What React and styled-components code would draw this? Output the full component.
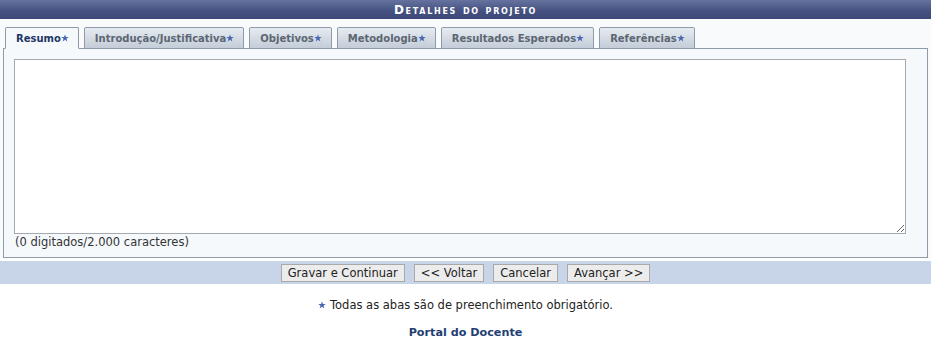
import React, { useState } from "react";
import styled, { createGlobalStyle } from "styled-components";

const GlobalStyle = createGlobalStyle`
  body {
    margin: 0;
    background: #ffffff;
    font-family: "DejaVu Sans", Verdana, sans-serif;
  }
`;

const Page = styled.div`
  display: flex;
  flex-direction: column;
  width: 931px;
`;

const Header = styled.div`
  height: 19px;
  display: flex;
  align-items: center;
  justify-content: center;
  background: linear-gradient(#66739f, #44507f 60%, #3c4878);
  color: #ffffff;
  font-size: 12px;
  font-weight: bold;
  font-variant: small-caps;
  letter-spacing: 1.7px;
`;

const Body = styled.div`
  background: #f8fafc;
  padding: 8px 3px 0 3px;
`;

const TabBar = styled.div`
  display: flex;
  gap: 5px;
  padding-left: 2px;
  position: relative;
  z-index: 1;
`;

const Tab = styled.div`
  height: 20px;
  display: flex;
  align-items: center;
  padding: 0 9px 0 10px;
  border: 1px solid #8e9ca9;
  border-bottom: ${(p) => (p.$active ? "1px solid #f6f9fc" : "1px solid #8e9ca9")};
  border-radius: 2px 2px 0 0;
  background: ${(p) => (p.$active ? "#f6f9fc" : "linear-gradient(#e6ebf1, #c3ccd8)")};
  color: ${(p) => (p.$active ? "#1d3766" : "#5c6672")};
  font-size: 10px;
  font-weight: bold;
  cursor: pointer;
`;

const Panel = styled.div`
  margin-top: -1px;
  border: 1px solid #8e9ca9;
  background: #f6f9fc;
  padding: 10px 10px 8px 10px;
  display: flex;
  flex-direction: column;
  gap: 2px;
`;

const TextBox = styled.textarea`
  width: 892px;
  height: 175px;
  box-sizing: border-box;
  border: 1px solid #a3a9ae;
  background: #ffffff;
  margin: 0;
  font-family: "DejaVu Sans", Verdana, sans-serif;
  font-size: 11px;
  resize: both;
`;

const Counter = styled.div`
  padding-left: 1px;
  font-size: 11.5px;
  line-height: 13px;
  color: #333333;
`;

const ButtonBar = styled.div`
  margin-top: 3px;
  height: 23px;
  background: #c8d4e8;
  display: flex;
  align-items: center;
  justify-content: center;
  gap: 9px;
`;

const Button = styled.button`
  height: 18px;
  padding: 0 6px;
  border: 1px solid #a9a9a9;
  background: #ececec;
  color: #222222;
  font-family: "DejaVu Sans", Verdana, sans-serif;
  font-size: 11.5px;
  cursor: pointer;
`;

const Note = styled.div`
  margin-top: 14px;
  display: flex;
  justify-content: center;
  align-items: center;
  gap: 4px;
  font-size: 11.5px;
  color: #222222;
`;

const PortalLink = styled.div`
  margin-top: 14px;
  text-align: center;
  font-size: 11.2px;
  font-weight: bold;
  color: #233e72;
`;

const Star = ({ size = 8 }) => (
  <svg width={size} height={size} viewBox="0 0 10 10">
    <polygon
      points="5,0.5 6.2,3.7 9.6,3.8 6.9,5.9 7.9,9.3 5,7.3 2.1,9.3 3.1,5.9 0.4,3.8 3.8,3.7"
      fill="#4a68b0"
    />
  </svg>
);

const tabs = [
  "Resumo",
  "Introdução/Justificativa",
  "Objetivos",
  "Metodologia",
  "Resultados Esperados",
  "Referências",
];

const App = () => {
  const [active, setActive] = useState(0);
  const [text, setText] = useState("");

  return (
    <Page>
      <GlobalStyle />
      <Header>Detalhes do projeto</Header>
      <Body>
        <TabBar>
          {tabs.map((t, i) => (
            <Tab key={t} $active={i === active} onClick={() => setActive(i)}>
              {t}
              <Star />
            </Tab>
          ))}
        </TabBar>
        <Panel>
          <TextBox value={text} onChange={(e) => setText(e.target.value)} />
          <Counter>({text.length} digitados/2.000 caracteres)</Counter>
        </Panel>
      </Body>
      <ButtonBar>
        <Button>Gravar e Continuar</Button>
        <Button>&lt;&lt; Voltar</Button>
        <Button>Cancelar</Button>
        <Button>Avançar &gt;&gt;</Button>
      </ButtonBar>
      <Note>
        <Star />
        Todas as abas são de preenchimento obrigatório.
      </Note>
      <PortalLink>Portal do Docente</PortalLink>
    </Page>
  );
};

export default App;
